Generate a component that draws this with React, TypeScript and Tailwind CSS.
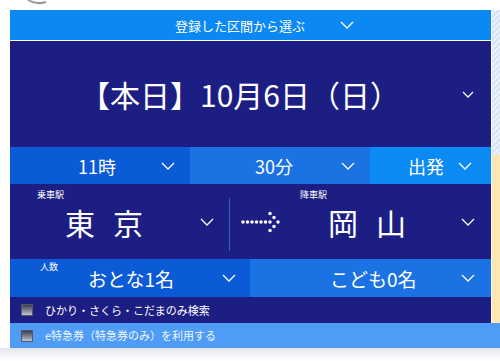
import React from "react";

const Chevron = ({ w = 14, h = 8 }: { w?: number; h?: number }) => (
  <svg width={w} height={h} viewBox={`0 0 ${w} ${h}`} fill="none">
    <polyline points={`1,1 ${w / 2},${h - 1} ${w - 1},1`} stroke="white" strokeWidth="1.3" />
  </svg>
);

const DotArrow = () => {
  const dots: [number, number][] = [
    [3, 11], [7.5, 11], [12, 11], [16.5, 11], [21, 11], [25.5, 11],
    [30, 2.5], [30, 11], [30, 19.5], [34, 6.5], [34, 15.5], [38, 11],
  ];
  return (
    <svg width="41" height="22" viewBox="0 0 41 22">
      {dots.map(([x, y], i) => (
        <circle key={i} cx={x} cy={y} r="1.75" fill="white" />
      ))}
    </svg>
  );
};

const Check = () => (
  <span className="block w-[12px] h-[12px] border border-[#55566a] bg-gradient-to-b from-[#3e3f52] to-[#c4c5cf]" />
);

export default function App() {
  return (
    <div className="w-[500px] h-[361px] bg-white overflow-hidden font-['Noto_Sans_CJK_JP','Liberation_Sans',sans-serif] text-white">
      <div className="h-[10px]">
        <svg width="60" height="10" className="ml-[22px]">
          <path d="M6 0 Q14 5 24 2" stroke="#9a9a9a" strokeWidth="2" fill="none" />
        </svg>
      </div>

      <div className="flex w-[500px]">
        <div className="ml-[10px] w-[481px] shrink-0">
          <div className="h-[31px] bg-[#0c88f3] border-b border-white flex items-center pl-[165px]">
            <span className="text-[13px] leading-none">登録した区間から選ぶ</span>
            <span className="ml-[35px]"><Chevron /></span>
          </div>

          <div className="h-[106px] bg-[#1d1e83] flex items-center pl-[70px] pr-[17px]">
            <span className="text-[30px] leading-none">【本日】10月6日（日）</span>
            <span className="ml-auto"><Chevron w={12} h={7} /></span>
          </div>

          <div className="h-[37px] flex text-[18px] leading-none">
            <div className="w-[180px] bg-[#0b5bd6] flex items-center pl-[68px] pr-[15px]">
              <span>11時</span>
              <span className="ml-auto"><Chevron /></span>
            </div>
            <div className="w-[180px] bg-[#1b72e3] flex items-center pl-[65px] pr-[15px]">
              <span>30分</span>
              <span className="ml-auto"><Chevron /></span>
            </div>
            <div className="flex-1 bg-[#0b8af4] flex items-center pl-[38px] pr-[19px]">
              <span>出発</span>
              <span className="ml-auto"><Chevron /></span>
            </div>
          </div>

          <div className="h-[75px] bg-[#1d1e83] flex">
            <div className="w-[219px] flex flex-col pt-[5px]">
              <span className="text-[9px] leading-[12px] pl-[27px]">乗車駅</span>
              <div className="h-[42px] flex items-center pl-[55px] pr-[15px]">
                <span className="text-[30px] leading-none tracking-[18px]">東京</span>
                <span className="ml-auto"><Chevron /></span>
              </div>
            </div>
            <div className="w-px h-[53px] self-center bg-[#2a64d0] mt-[6px]" />
            <div className="flex-1 flex flex-col pt-[5px]">
              <span className="text-[9px] leading-[12px] pl-[70px]">降車駅</span>
              <div className="h-[42px] flex items-center pl-[10px] pr-[16px]">
                <DotArrow />
                <span className="ml-[47px] text-[30px] leading-none tracking-[18px]">岡山</span>
                <span className="ml-auto"><Chevron /></span>
              </div>
            </div>
          </div>

          <div className="h-[38px] flex">
            <div className="w-[240px] bg-[#0b5ad6] flex items-center pr-[14px] relative">
              <span className="absolute left-[30px] top-[2px] text-[9px] leading-[12px]">人数</span>
              <span className="ml-[78px] text-[19px] leading-none">おとな1名</span>
              <span className="ml-auto"><Chevron /></span>
            </div>
            <div className="flex-1 bg-[#1b72e3] flex items-center pl-[80px] pr-[16px]">
              <span className="text-[19px] leading-none">こども0名</span>
              <span className="ml-auto"><Chevron /></span>
            </div>
          </div>

          <div className="h-[26px] bg-[#1d1e83] flex items-center pl-[11px] gap-[12px]">
            <Check />
            <span className="text-[11px] leading-none">ひかり・さくら・こだまのみ検索</span>
          </div>
        </div>

        <div className="ml-px w-[8px] shrink-0 flex flex-col">
          <div className="h-[145px] bg-[repeating-linear-gradient(135deg,#d6e5f4_0px,#d6e5f4_2px,#ebf2fa_2px,#ebf2fa_4px)]" />
          <div className="flex-1 bg-[#fce6b3]" />
        </div>
      </div>

      <div className="ml-[10px] h-[25px] bg-[#4e9cf6] flex items-center pl-[11px] gap-[12px]">
        <Check />
        <span className="text-[11px] leading-none text-[#eef5ff]">e特急券（特急券のみ）を利用する</span>
      </div>
      <div className="h-[13px] bg-gradient-to-b from-[#e3e6eb] to-white" />
    </div>
  );
}
